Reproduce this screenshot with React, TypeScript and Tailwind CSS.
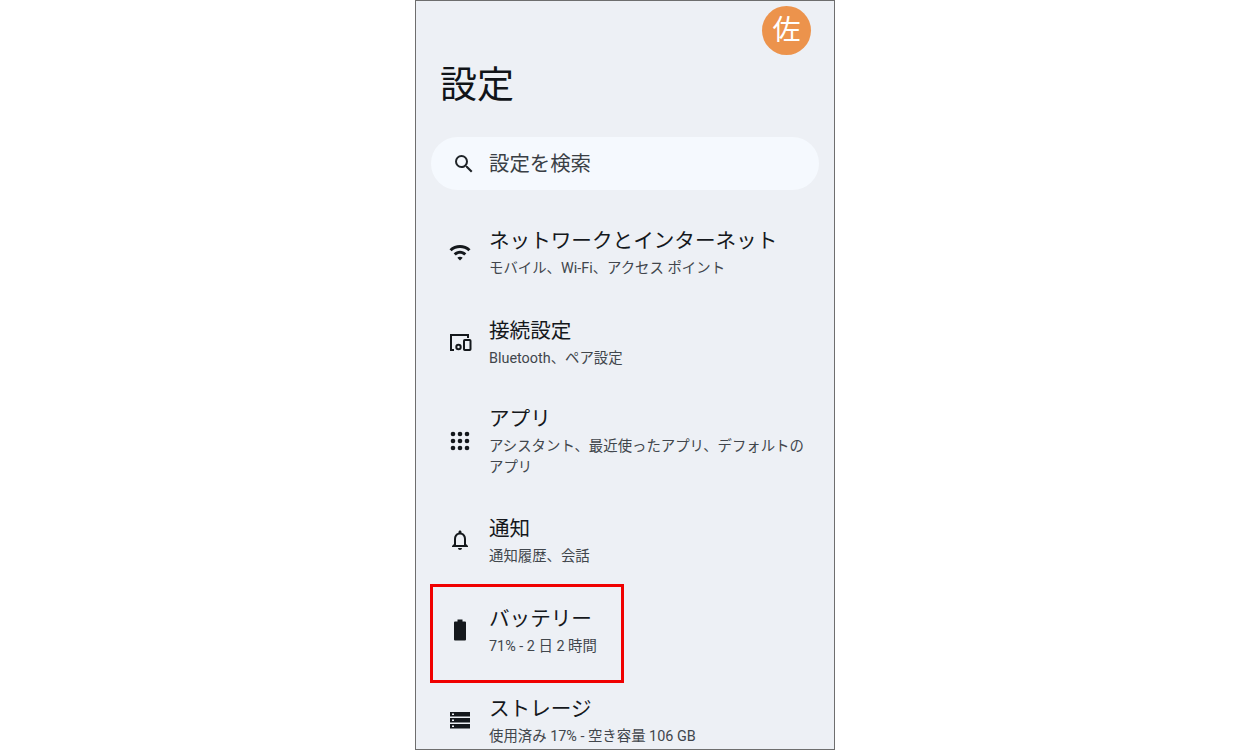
const FONT = 'font-["Roboto","Noto_Sans_CJK_JP",sans-serif]'

function WifiIcon() {
  return (
    <svg width="24" height="24" viewBox="0 0 24 24" fill="#14181c">
      <path d="M1.5 9.2 3.6 11.3C8.2 6.9 15.8 6.9 20.4 11.3L22.5 9.2C16.7 3.6 7.3 3.6 1.5 9.2Z" />
      <path d="M5.7 13.4 7.8 15.5C10.1 13.3 13.9 13.3 16.2 15.5L18.3 13.4C14.8 10 9.2 10 5.7 13.4Z" />
      <path d="M12 20.5 9.3 17.8C10.8 16.3 13.2 16.3 14.7 17.8Z" />
    </svg>
  )
}

function DevicesIcon() {
  return (
    <svg width="24" height="24" viewBox="0 0 24 24" fill="none" stroke="#14181c" strokeWidth="2">
      <path d="M6 20H3V5H20V8" />
      <rect x="16" y="10" width="6.5" height="10" rx="0.8" />
      <circle cx="10.5" cy="17" r="2.2" />
    </svg>
  )
}

function AppsIcon() {
  const spots = [5, 12, 19]
  return (
    <svg width="24" height="24" viewBox="0 0 24 24" fill="#14181c">
      {spots.map((y) => spots.map((x) => <circle key={`${x}-${y}`} cx={x} cy={y} r="2.3" />))}
    </svg>
  )
}

function BellIcon() {
  return (
    <svg width="24" height="24" viewBox="0 0 24 24" fill="#14181c">
      <path d="M12 22c1.1 0 2-.9 2-2h-4c0 1.1.9 2 2 2Zm6-6v-5c0-3.1-1.6-5.6-4.5-6.3V4c0-.8-.7-1.5-1.5-1.5s-1.5.7-1.5 1.5v.7C7.6 5.4 6 7.9 6 11v5l-2 2v1h16v-1l-2-2Zm-2 1H8v-6c0-2.5 1.5-4.5 4-4.5s4 2 4 4.5v6Z" />
    </svg>
  )
}

function BatteryIcon() {
  return (
    <svg width="24" height="24" viewBox="0 0 24 24" fill="#14181c">
      <path d="M9.5 1.5h5v2H17a1 1 0 0 1 1 1V21.500a1 1 0 0 1-1 1H7a1 1 0 0 1-1-1V4.500a1 1 0 0 1 1-1h2.500V1.500Z" />
    </svg>
  )
}

function StorageIcon() {
  return (
    <svg width="24" height="24" viewBox="0 0 24 24" fill="#14181c">
      <path d="M2 4h20v4.500H2V4Zm2 1.400v1.600h2V5.400H4ZM2 10h20v4.500H2V10Zm2 1.400V13h2v-1.600H4ZM2 16h20v4.500H2V16Zm2 1.400V19h2v-1.600H4Z" />
    </svg>
  )
}

function SearchIcon() {
  return (
    <svg width="24" height="24" viewBox="0 0 24 24" fill="#1f2428">
      <path d="M15.5 14h-.79l-.28-.27A6.471 6.471 0 0 0 16 9.5 6.5 6.5 0 1 0 9.5 16c1.61 0 3.09-.59 4.23-1.57l.27.28v.79l5 4.99L20.49 19l-4.99-5zm-6 0C7.01 14 5 11.99 5 9.5S7.01 5 9.5 5 14 7.01 14 9.5 11.990 14 9.5 14z" />
    </svg>
  )
}

const ROWS = [
  { icon: <WifiIcon />, title: 'ネットワークとインターネット', sub: ['モバイル、Wi-Fi、アクセス ポイント'], cls: 'h-[90px]' },
  { icon: <DevicesIcon />, title: '接続設定', sub: ['Bluetooth、ペア設定'], cls: 'h-[88px]' },
  { icon: <AppsIcon />, title: 'アプリ', sub: ['アシスタント、最近使ったアプリ、デフォルトの', 'アプリ'], cls: 'h-[110px]' },
  { icon: <BellIcon />, title: '通知', sub: ['通知履歴、会話'], cls: 'h-[90px]' },
  { icon: <BatteryIcon />, title: 'バッテリー', sub: ['71% - 2 日 2 時間'], cls: 'h-[90px]' },
  { icon: <StorageIcon />, title: 'ストレージ', sub: ['使用済み 17% - 空き容量 106 GB'], cls: 'h-[90px]' },
]

export default function App() {
  return (
    <div className={`h-[750px] w-[1250px] overflow-hidden bg-white ${FONT}`}>
      <div className="relative ml-[415px] flex h-[750px] w-[420px] flex-col overflow-hidden border border-[#6e6e6e] bg-[#edf0f5]">
        {/* Avatar */}
        <div className="flex shrink-0 justify-end pt-[5px] pr-[23px]">
          <div className="flex h-[49px] w-[49px] items-center justify-center rounded-full bg-[#ec934c] text-[28px] leading-none text-white">
            佐
          </div>
        </div>

        <h1 className="mt-[6px] shrink-0 pl-[24px] text-[37px] leading-[50px] font-normal text-[#111418]">設定</h1>

        {/* Search */}
        <div className="mx-[15px] mt-[26px] flex h-[53px] shrink-0 items-center rounded-full bg-[#f5f9fe] pl-[21px]">
          <SearchIcon />
          <span className="mt-[2px] ml-[13px] text-[20.4px] text-[#3a3f45]">設定を検索</span>
        </div>

        {/* Setting rows */}
        <div className="mt-[37px] flex flex-col">
          {ROWS.map((row) => (
            <div key={row.title} className={`shrink-0 pl-[32px] ${row.cls}`}>
              <div className="flex items-center">
                <div className="mb-[2px] w-[41px] shrink-0">{row.icon}</div>
                <div>
                  <div className="text-[20.6px] leading-[28px] text-[#15181c]">{row.title}</div>
                  <div className="mt-[3px]">
                    {row.sub.map((line) => (
                      <div key={line} className="text-[14.4px] leading-[21px] text-[#41464c]">
                        {line}
                      </div>
                    ))}
                  </div>
                </div>
              </div>
            </div>
          ))}
        </div>

        {/* Highlight frame */}
        <div className="absolute top-[583px] left-[14px] h-[99px] w-[194px] border-[3px] border-[#f00000]" />
      </div>
    </div>
  )
}
